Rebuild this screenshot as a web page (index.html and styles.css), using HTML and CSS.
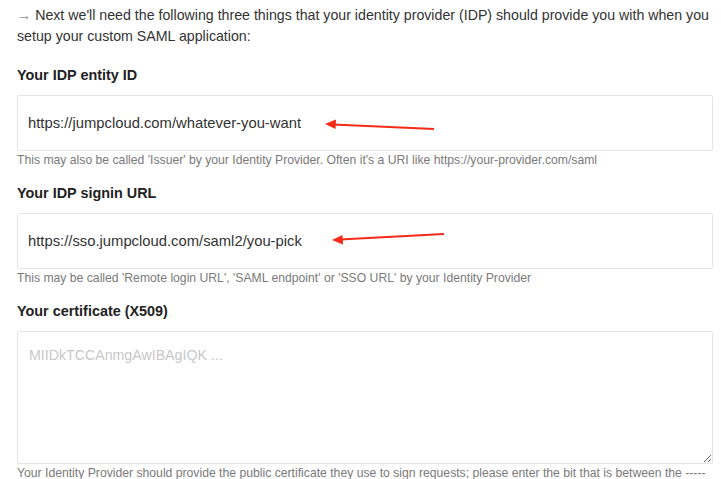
FILE: index.html
```html
<!DOCTYPE html>
<html lang="en">
<head>
    <meta charset="UTF-8">
    <meta name="viewport" content="width=device-width, initial-scale=1.0">
    <title>SAML setup</title>
    <link rel="stylesheet" href="styles.css">
</head>
<body>
    <div class="container">
        <p class="intro"><span class="lead">&rarr;</span> Next we'll need the following three things that your identity provider (IDP) should provide you with when you setup your custom SAML application:</p>

        <div class="field">
            <label for="entity">Your IDP entity ID</label>
            <input type="text" id="entity" value="https://jumpcloud.com/whatever-you-want">
            <p class="hint">This may also be called 'Issuer' by your Identity Provider. Often it's a URI like https://your-provider.com/saml</p>
        </div>

        <div class="field">
            <label for="signin">Your IDP signin URL</label>
            <input type="text" id="signin" value="https://sso.jumpcloud.com/saml2/you-pick">
            <p class="hint">This may be called 'Remote login URL', 'SAML endpoint' or 'SSO URL' by your Identity Provider</p>
        </div>

        <div class="field">
            <label for="cert">Your certificate (X509)</label>
            <textarea id="cert" placeholder="MIIDkTCCAnmgAwIBAgIQK ..."></textarea>
            <p class="hint">Your Identity Provider should provide the public certificate they use to sign requests; please enter the bit that is between the -----BEGIN CERTIFICATE----- and -----END CERTIFICATE----- lines.</p>
        </div>

        <!-- annotation arrows drawn over the screenshot -->
        <svg class="marks" width="721" height="479" viewBox="0 0 721 479">
            <line x1="434" y1="129" x2="333" y2="124.4" stroke="#f52a17" stroke-width="2"/>
            <polygon points="325,124 336,119.5 335.5,129" fill="#f52a17"/>
            <line x1="444" y1="234" x2="340" y2="239.6" stroke="#f52a17" stroke-width="2"/>
            <polygon points="332,240 342.5,235 343,244.5" fill="#f52a17"/>
        </svg>
    </div>
</body>
</html>
```

FILE: styles.css
```css
body {
    font-family: "Liberation Sans", Arial, Helvetica, sans-serif;
    background-color: #fff;
    color: #2b2b2b;
    margin: 0;
    padding: 0;
    overflow: hidden;
}

.container {
    position: relative;
    padding: 5px 8px 0 17px;
}

.intro {
    margin: 0 0 18px;
    font-size: 14.2px;
    line-height: 21px;
    color: #333;
}

.intro .lead {
    color: #8c8c8c;
}

.field {
    margin-bottom: 14px;
}

label {
    display: block;
    margin-bottom: 9px;
    font-size: 14.4px;
    line-height: 21px;
    font-weight: bold;
    color: #222;
}

input[type="text"],
textarea {
    display: block;
    box-sizing: border-box;
    width: 100%;
    border: 1px solid #e3e5e8;
    border-radius: 2px;
    font-family: inherit;
    color: #333;
    background: #fff;
    outline: none;
}

input[type="text"] {
    height: 56px;
    padding: 0 10px;
    font-size: 14.8px;
}

textarea {
    height: 133px;
    padding: 13px 11px;
    font-size: 14.2px;
    line-height: 21px;
    resize: vertical;
}

textarea::placeholder {
    color: #c8c8c8;
}

.hint {
    margin: 1px 0 0;
    font-size: 12.2px;
    line-height: 17px;
    color: #7a7a7a;
}

.marks {
    position: absolute;
    top: 0;
    left: 0;
    pointer-events: none;
}
```
